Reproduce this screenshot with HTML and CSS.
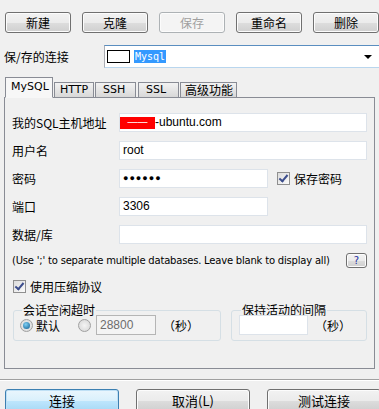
FILE: index.html
```html
<!DOCTYPE html>
<html lang="zh">
<head>
    <meta charset="UTF-8">
    <title>连接</title>
    <link rel="stylesheet" href="styles.css">
</head>
<body>
    <!-- toolbar -->
    <div class="toolbar">
        <button class="btn">新建</button>
        <button class="btn">克隆</button>
        <button class="btn disabled">保存</button>
        <button class="btn">重命名</button>
        <button class="btn">删除</button>
    </div>

    <div class="conn-row">
        <span class="conn-label">保/存的连接</span>
        <div class="combo">
            <span class="swatch"></span>
            <span class="combo-text">Mysql</span>
            <span class="combo-arrow"></span>
        </div>
    </div>

    <div class="tabs">
        <div class="tab active">MySQL</div>
        <div class="tab">HTTP</div>
        <div class="tab">SSH</div>
        <div class="tab">SSL</div>
        <div class="tab cjk">高级功能</div>
    </div>

    <div class="panel">
        <div class="form-grid">
            <span class="lbl">我的SQL主机地址</span>
            <div class="field wide"><span class="redact">——</span>-ubuntu.com</div>

            <span class="lbl">用户名</span>
            <div class="field wide">root</div>

            <span class="lbl">密码</span>
            <div class="split">
                <div class="field short dots">●●●●●●</div>
                <label class="check"><span class="box checked"></span>保存密码</label>
            </div>

            <span class="lbl">端口</span>
            <div class="field short">3306</div>

            <span class="lbl">数据/库</span>
            <div class="field wide"></div>
        </div>

        <div class="note-row">
            <span class="note">(Use ';' to separate multiple databases. Leave blank to display all)</span>
            <button class="btn help">?</button>
        </div>

        <label class="check compress"><span class="box checked"></span>使用压缩协议</label>

        <div class="groups">
            <fieldset class="group timeout">
                <legend>会话空闲超时</legend>
                <div class="group-body">
                    <label class="radio"><span class="dot on"></span>默认</label>
                    <span class="dot"></span>
                    <div class="field num disabled">28800</div>
                    <span class="unit">（秒）</span>
                </div>
            </fieldset>
            <fieldset class="group keepalive">
                <legend>保持活动的间隔</legend>
                <div class="group-body">
                    <div class="field num"></div>
                    <span class="unit">（秒）</span>
                </div>
            </fieldset>
        </div>
    </div>

    <div class="footer">
        <button class="btn big default">连接</button>
        <button class="btn big">取消(L)</button>
        <button class="btn big">测试连接</button>
    </div>
</body>
</html>
```

FILE: styles.css
```css
body {
    margin: 0;
    width: 379px;
    height: 409px;
    overflow: hidden;
    background-color: #f0f0f0;
    font-family: "Noto Sans CJK SC", "Liberation Sans", sans-serif;
    font-size: 12px;
    color: #000;
}
.toolbar {
    display: flex;
    gap: 11px;
    padding: 12px 0 0 5px;
}
.btn {
    font-family: "Noto Sans CJK SC", sans-serif;
    font-size: 12px;
    line-height: 1;
    padding: 0;
    color: #000;
    border: 1px solid #707070;
    border-radius: 3px;
    background: linear-gradient(#f2f2f2 0%, #ebebeb 50%, #dddddd 51%, #cfcfcf 100%);
    box-shadow: inset 0 0 0 1px #fcfcfc;
}
.toolbar .btn {
    width: 66px;
    height: 21px;
    flex: none;
}
.btn.disabled {
    color: #a0a0a0;
    border-color: #adb2b5;
    background: #f4f4f4;
}

/* saved connection */
.conn-row {
    display: flex;
    align-items: center;
    margin-top: 12px;
    padding-left: 4px;
}
.conn-label {
    width: 100px;
    font-size: 12px;
}
.combo {
    flex: 1;
    height: 21px;
    display: flex;
    align-items: center;
    background: #fff;
    border: 1px solid #abadb3;
    border-top-color: #5a8ec0;
    border-bottom-color: #b9d6ee;
    border-right: none;
}
.swatch {
    width: 21px;
    height: 11px;
    margin-left: 2px;
    border: 1px solid #000;
    background: #fff;
}
.combo-text {
    margin-left: 4px;
    padding: 0 1px;
    font-family: "DejaVu Sans Mono", monospace;
    font-size: 10px;
    line-height: 13px;
    color: #fff;
    background: #3399ff;
}
.combo-arrow {
    margin-left: auto;
    margin-right: 7px;
    width: 0;
    height: 0;
    border-left: 4px solid transparent;
    border-right: 4px solid transparent;
    border-top: 4px solid #000;
}

/* tabs */
.tabs {
    display: flex;
    align-items: flex-end;
    margin-top: 8px;
    padding-left: 5px;
    height: 21px;
    position: relative;
    z-index: 1;
}
.tab {
    box-sizing: border-box;
    height: 15px;
    margin-right: 1px;
    padding: 0 0 0 7px;
    font-family: "DejaVu Sans", sans-serif;
    font-size: 11px;
    line-height: 14px;
    white-space: nowrap;
    border: 1px solid #898c95;
    border-bottom: none;
    background: linear-gradient(#f2f2f2, #d8d8d8);
}
.tab:nth-child(2) { width: 40px; padding-left: 5px; }
.tab:nth-child(3) { width: 41px; margin-right: 2px; }
.tab:nth-child(4) { width: 41px; margin-right: 1px; }
.tab.cjk {
    font-family: "Noto Sans CJK SC", sans-serif;
    font-size: 12px;
    width: 57px;
    padding-left: 4px;
}
.tab.active {
    height: 21px;
    width: 48px;
    padding-left: 5px;
    line-height: 17px;
    background: #f7f7f7;
    margin-bottom: -1px;
    border-bottom: 1px solid #f7f7f7;
}

/* panel */
.panel {
    margin-left: 4px;
    width: 371px;
    height: 272px;
    border: 1px solid #898c95;
    background: #f0f0f0;
    padding: 0;
    box-sizing: border-box;
}
.form-grid {
    display: grid;
    grid-template-columns: 107px 248px;
    row-gap: 9px;
    align-items: center;
    padding: 15px 0 0 7px;
}
.lbl {
    font-size: 12px;
}
.field {
    height: 19px;
    box-sizing: border-box;
    background: #fff;
    border: 1px solid #dde3ea;
    padding-left: 3px;
    font-family: "Liberation Sans", sans-serif;
    font-size: 12px;
    line-height: 17px;
    display: flex;
    align-items: center;
}
.field.short {
    width: 149px;
}
.dots {
    font-size: 9px;
    letter-spacing: 1px;
}
.redact {
    background: #ff0000;
    color: #fff;
    width: 35px;
    height: 12px;
    margin-left: -3px;
    font-size: 10px;
    line-height: 10px;
    text-align: center;
}
.split {
    display: flex;
    align-items: center;
}
.check {
    display: flex;
    align-items: center;
    gap: 4px;
    font-size: 12px;
}
.split .check {
    margin-left: 9px;
}
.box {
    width: 11px;
    height: 11px;
    border: 1px solid #8f8f8f;
    background: linear-gradient(135deg, #dcdcdc, #fbfbfb);
    position: relative;
}
.box.checked::after {
    content: "";
    position: absolute;
    left: 3px;
    top: 0px;
    width: 3px;
    height: 7px;
    border-right: 2px solid #3c4d8c;
    border-bottom: 2px solid #3c4d8c;
    transform: rotate(40deg);
}

.note-row {
    display: flex;
    align-items: center;
    justify-content: space-between;
    padding: 9px 7px 0 7px;
}
.note {
    font-family: "DejaVu Sans", sans-serif;
    font-size: 10px;
    letter-spacing: -0.2px;
}
.btn.help {
    width: 21px;
    height: 15px;
    font-family: "DejaVu Sans", sans-serif;
    font-size: 10px;
    color: #1c2fa0;
}
.compress {
    margin: 10px 0 0 8px;
}

/* group boxes */
.groups {
    display: flex;
    gap: 10px;
    padding: 8px 0 0 8px;
}
.group {
    margin: 0;
    padding: 0 0 8px 6px;
    height: 38px;
    box-sizing: border-box;
    border: 1px solid #d5dfe5;
    border-radius: 3px;
}
.group legend {
    padding: 0 1px;
    margin-left: 2px;
    font-size: 12px;
    line-height: 14px;
}
.group.timeout {
    width: 208px;
}
.group.keepalive {
    width: 136px;
    padding-left: 7px;
}
.group-body {
    display: flex;
    align-items: center;
    margin-top: -2px;
}
.radio {
    display: flex;
    align-items: center;
    gap: 3px;
    margin-right: 18px;
}
.dot {
    width: 11px;
    height: 11px;
    border-radius: 50%;
    border: 1px solid #a0a0a0;
    background: radial-gradient(circle, #f4f4f4, #d4d4d4);
    box-sizing: content-box;
    position: relative;
}
.dot.on::after {
    content: "";
    position: absolute;
    left: 2px;
    top: 2px;
    width: 7px;
    height: 7px;
    border-radius: 50%;
    background: radial-gradient(circle at 40% 35%, #7fd0f4, #0d5a8f);
}
.group-body > .dot {
    margin-right: 5px;
}
.field.num {
    width: 60px;
    height: 20px;
}
.keepalive .field.num {
    width: 69px;
}
.field.disabled {
    background: #f4f4f4;
    border-color: #b5b5b5;
    color: #6d6d6d;
}
.unit {
    margin-left: 7px;
    font-size: 12px;
}

/* footer */
.footer {
    display: flex;
    gap: 17px;
    margin-top: 10px;
    padding: 9px 0 0 5px;
    border-top: 1px solid #a0a0a0;
    box-shadow: inset 0 1px 0 #fff;
}
.btn.big {
    width: 114px;
    height: 23px;
    flex: none;
    font-size: 13px;
}
.btn.default {
    border-color: #3c7fb1;
    background: linear-gradient(#eaf6fd 0%, #d9f0fc 50%, #bee6fd 51%, #a7d9f5 100%);
    box-shadow: inset 0 0 0 1px #bfe0f5;
}
```
